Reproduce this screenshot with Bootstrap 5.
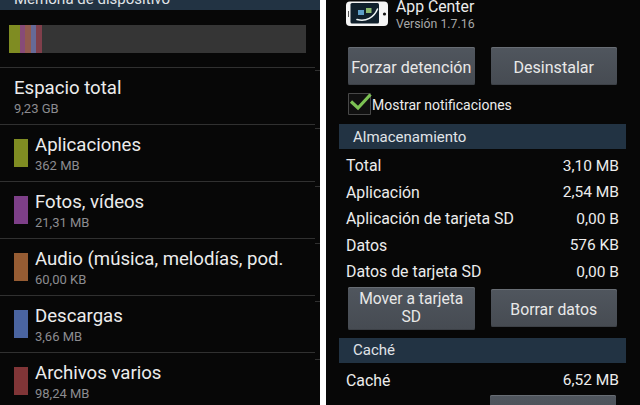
<!DOCTYPE html>
<html lang="es">
<head>
<meta charset="utf-8">
<meta name="viewport" content="width=device-width, initial-scale=1">
<title>Almacenamiento</title>
<link href="https://cdn.jsdelivr.net/npm/bootstrap@5.3.0/dist/css/bootstrap.min.css" rel="stylesheet">
<style>
body{width:640px;height:405px;background:#070707;color:#ececec;font-family:Roboto,"Liberation Sans",sans-serif;line-height:1}
.screen{height:405px}
.storage{width:320px}
.gap-bar{width:6px;background:#fff}
.detail{width:314px;padding-left:13px}
.heading{background:#223343;color:#e0e4e8}
.storage .heading{height:10px;padding-left:14px;font-size:15px}
.storage .heading span{margin-top:-10px;line-height:18px}
.usage{height:28px;width:297px;margin:15px 0 14px 9px;background:#353535}
.rows{width:315px}
.item{height:57px;border-top:1px solid #303030;padding:10px 0 0 14px}
.title{font-size:18.6px;line-height:21px;white-space:nowrap}
.size{font-size:13px;line-height:15px;margin-top:2px;color:#8c8c90}
.swatch{width:14px;height:28px;margin:4px 7px 0 0}
.edge{width:5px;padding-top:3px}
.edge i{height:57.8px;border-top:1px solid #303030}
.olive{background:#7f8c22}.purple{background:#7d3f88}.orange{background:#965c33}.blue{background:#4a64a0}.red{background:#803537}
.app{height:47px;padding-left:3px}
.app-name{font-size:15.8px;line-height:18px;margin-top:-2px}
.version{font-size:12.3px;line-height:15px;margin-top:1px;color:#a8a8a8}
.detail .heading{width:287px;height:25px;padding:1px 0 0 14px;font-size:15px}
.key{width:126.5px;height:38px;border:0;border-radius:2px;background:linear-gradient(#50565e,#464b52);box-shadow:inset 0 1px #686d74,inset 0 -1px #3d4147;color:#e8e8e8;font-size:16.1px;line-height:19px;padding:2px 0 0;white-space:nowrap}
.key.tall{height:43px;font-size:15.6px;line-height:18px;padding:0}
.key.mid{font-size:15.8px}
.keys{padding-left:9px;gap:16px}
.move-keys{margin:1px 0 8px}
.notify{height:39px;padding-left:9px;font-size:14px}
.fact{height:26.5px;width:280px;padding-left:7px;font-size:15.5px}
.fact span:first-child{font-size:15.85px}
.cache-facts{padding:5px 0 1px}
</style>
<script src="https://cdn.jsdelivr.net/npm/bootstrap@5.3.0/dist/js/bootstrap.bundle.min.js"></script>
</head>
<body class="overflow-hidden">
<main class="screen d-flex overflow-hidden">
<section class="storage flex-shrink-0 overflow-hidden">
  <div class="heading d-flex"><span>Memoria de dispositivo</span></div>
  <div class="usage d-flex">
    <svg width="34" height="28"><path fill="#7f8c22" d="M0 0h11v28H0z"/><path fill="#874b78" d="M11 0h5v28h-5z"/><path fill="#925b4e" d="M16 0h6v28h-6z"/><path fill="#666a98" d="M22 0h5v28h-5z"/><path fill="#803f4b" d="M27 0h6v28h-6z"/></svg>
  </div>
  <div class="d-flex">
    <div class="rows">
      <div class="item"><div class="title"><span>Espacio total</span></div><div class="size"><span>9,23 GB</span></div></div>
      <div class="item d-flex"><div class="swatch olive"></div><div><div class="title"><span>Aplicaciones</span></div><div class="size"><span>362 MB</span></div></div></div>
      <div class="item d-flex"><div class="swatch purple"></div><div><div class="title"><span>Fotos, vídeos</span></div><div class="size"><span>21,31 MB</span></div></div></div>
      <div class="item d-flex"><div class="swatch orange"></div><div><div class="title"><span>Audio (música, melodías, pod.</span></div><div class="size"><span>60,00 KB</span></div></div></div>
      <div class="item d-flex"><div class="swatch blue"></div><div><div class="title"><span>Descargas</span></div><div class="size"><span>3,66 MB</span></div></div></div>
      <div class="item d-flex"><div class="swatch red"></div><div><div class="title"><span>Archivos varios</span></div><div class="size"><span>98,24 MB</span></div></div></div>
    </div>
    <div class="edge"><i class="d-block"></i><i class="d-block"></i><i class="d-block"></i><i class="d-block"></i><i class="d-block"></i><i class="d-block"></i></div>
  </div>
</section>
<div class="gap-bar flex-shrink-0"></div>
<section class="detail flex-shrink-0 overflow-hidden">
  <div class="app d-flex">
    <svg width="50" height="30" viewBox="342 0 50 30"><rect x="346" y="1.500" width="42" height="24.500" rx="4" fill="#f4f4f4"/><rect x="350.500" y="3" width="28.500" height="20.500" rx="1.500" fill="#10202c"/><path d="M358 10h6v5h-6z" fill="#5e9fc8"/><path d="M366 8h5.500v5h-5.500z" fill="#8dbb70"/><path d="M357 19.500c9 2.500 17-2 20.500-10.500" fill="none" stroke="#eef4f4" stroke-width="1.600" stroke-linecap="round"/><circle cx="384.500" cy="14" r="1.600" fill="#111"/><path d="M348.500 11v6" stroke="#555"/></svg>
    <div class="ms-1"><div class="app-name"><span>App Center</span></div><div class="version"><span>Versión 1.7.16</span></div></div>
  </div>
  <div class="keys d-flex"><button class="btn key"><span>Forzar detención</span></button><button class="btn key"><span>Desinstalar</span></button></div>
  <div class="notify d-flex align-items-center">
    <svg width="24" height="25" viewBox="0 0 24 25"><path d="M.5 1.500h22v21H.5z" fill="#101010" stroke="#484848"/><path d="M3 9.500L10 16 22.500 2.500" fill="none" stroke="#7cc253" stroke-width="3.200"/></svg>
    <span>Mostrar notificaciones</span>
  </div>
  <div class="heading d-flex align-items-center"><span>Almacenamiento</span></div>
  <div class="pt-1">
    <div class="fact d-flex justify-content-between align-items-center"><span>Total</span><span>3,10 MB</span></div>
    <div class="fact d-flex justify-content-between align-items-center"><span>Aplicación</span><span>2,54 MB</span></div>
    <div class="fact d-flex justify-content-between align-items-center"><span>Aplicación de tarjeta SD</span><span>0,00 B</span></div>
    <div class="fact d-flex justify-content-between align-items-center"><span>Datos</span><span>576 KB</span></div>
    <div class="fact d-flex justify-content-between align-items-center"><span>Datos de tarjeta SD</span><span>0,00 B</span></div>
  </div>
  <div class="keys move-keys d-flex align-items-center"><button class="btn key tall"><span>Mover a tarjeta<br>SD</span></button><button class="btn key mid"><span>Borrar datos</span></button></div>
  <div class="heading d-flex align-items-center"><span>Caché</span></div>
  <div class="cache-facts"><div class="fact d-flex justify-content-between align-items-center"><span>Caché</span><span>6,52 MB</span></div></div>
  <div class="keys d-flex justify-content-end pe-4"><button class="btn key" aria-label="Borrar caché"></button></div>
</section>
</main>
</body>
</html>
